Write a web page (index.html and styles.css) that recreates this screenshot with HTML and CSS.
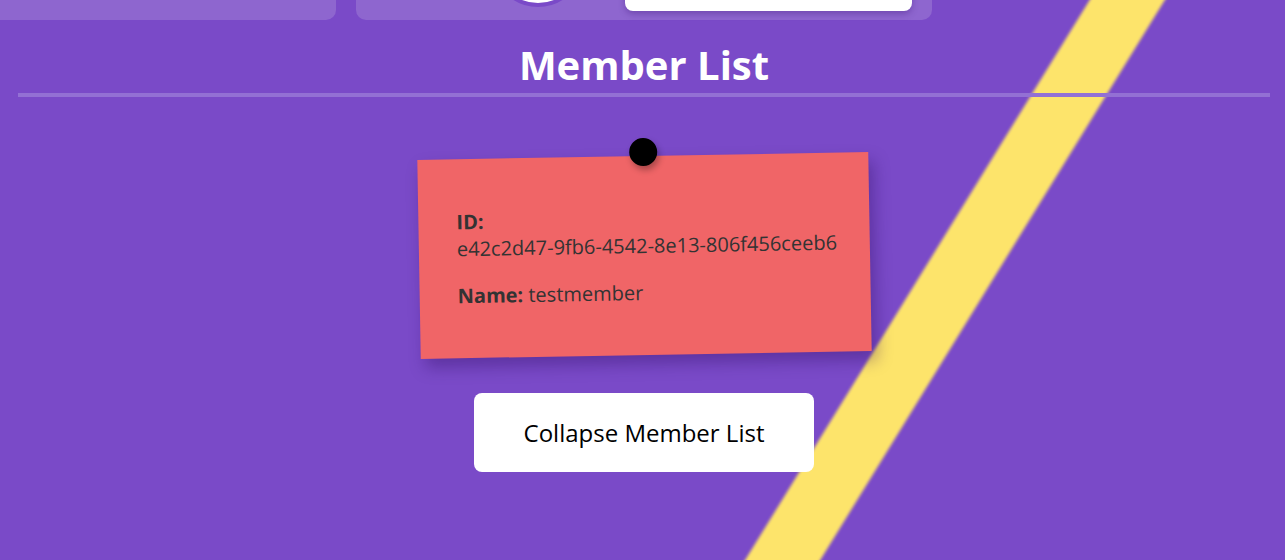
FILE: index.html
```html
<!DOCTYPE html>
<html lang="en">
<head>
<meta charset="utf-8">
<title>Member List</title>
<link rel="stylesheet" href="styles.css">
</head>
<body>
<div class="stripe"></div>
<div class="page">
  <div class="top-cards">
    <div class="card card-left"></div>
    <div class="card card-main">
      <div class="avatar"></div>
      <div class="field"></div>
    </div>
  </div>
  <main class="content">
    <h1 class="title">Member List</h1>
    <div class="divider"></div>
    <div class="notes">
      <div class="note">
        <span class="pin"></span>
        <p><strong>ID:</strong> <span class="nowrap">e42c2d47-9fb6-4542-8e13-806f456ceeb6</span></p>
        <p><strong>Name:</strong> testmember</p>
      </div>
    </div>
    <div class="actions">
      <button class="btn">Collapse Member List</button>
    </div>
  </main>
</div>
</body>
</html>
```
FILE: styles.css
```css
html, body {
  margin: 0;
  padding: 0;
}
body {
  background: #7a4ac8;
  font-family: "Open Sans", "Noto Sans", sans-serif;
  width: 1285px;
  height: 560px;
  overflow: hidden;
  position: relative;
}
.stripe {
  position: absolute;
  left: 923px;
  top: -420px;
  width: 64px;
  height: 1400px;
  background: #fde46b;
  transform: rotate(31.6deg);
  filter: blur(1.4px);
  z-index: 0;
}
.page {
  position: relative;
  z-index: 1;
}
.top-cards {
  display: flex;
  gap: 20px;
  height: 140px;
  margin-top: -120px;
}
.card {
  background: #8e66cf;
  border-radius: 10px;
  height: 140px;
  box-sizing: border-box;
}
.card-left {
  width: 336px;
  border-radius: 0 10px 10px 0;
}
.card-main {
  width: 576px;
  display: flex;
  align-items: flex-end;
  padding: 0 20px 9px 136px;
  gap: 41px;
}
.avatar {
  width: 84px;
  height: 84px;
  border-radius: 50%;
  background: #ffffff;
  border: 4px solid #7a4ac8;
  margin-bottom: 4px;
  flex: none;
}
.field {
  flex: 1;
  height: 44px;
  background: #ffffff;
  border-radius: 8px;
  box-shadow: 0 3px 6px rgba(60, 20, 120, 0.35);
}
.content {
  margin: 0 15px 0 18px;
  display: flex;
  flex-direction: column;
  align-items: center;
}
.title {
  margin: 18px 0 1px;
  font-size: 40px;
  line-height: 54px;
  font-weight: 700;
  color: #ffffff;
}
.divider {
  align-self: stretch;
  height: 4px;
  background: #9370d4;
}
.notes {
  margin-top: 59px;
  display: flex;
  justify-content: center;
}
.note {
  position: relative;
  width: 451px;
  box-sizing: border-box;
  padding: 29px 30px 29px 38px;
  background: #f06567;
  color: #333333;
  font-size: 20px;
  transform: rotate(-1deg);
  box-shadow: 5px 9px 16px rgba(40, 10, 90, 0.35);
}
.note p {
  margin: 20px 0;
  line-height: 27px;
}
.nowrap {
  white-space: nowrap;
}
.pin {
  position: absolute;
  top: -18px;
  left: 50%;
  width: 28px;
  height: 28px;
  margin-left: -14px;
  border-radius: 50%;
  background: #000000;
  box-shadow: 2px 4px 6px rgba(0, 0, 0, 0.3);
}
.actions {
  margin-top: 38px;
}
.btn {
  font-family: "Open Sans", "Noto Sans", sans-serif;
  font-size: 24px;
  line-height: 33px;
  color: #000000;
  background: #ffffff;
  border: none;
  border-radius: 8px;
  padding: 23px 50px;
  cursor: pointer;
}
```
